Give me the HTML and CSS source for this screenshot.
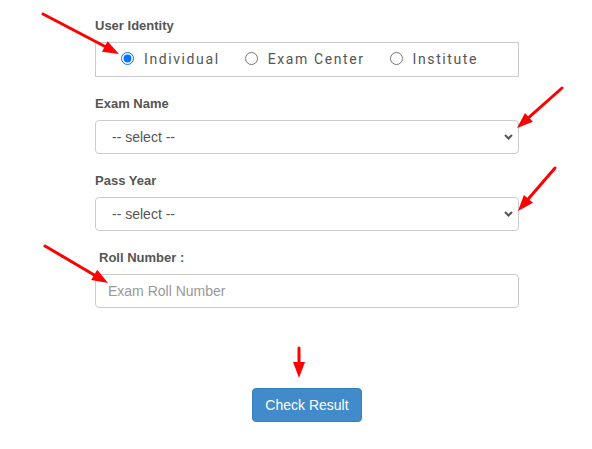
FILE: index.html
```html
<!DOCTYPE html>
<html lang="en">
<head>
<meta charset="utf-8">
<title>Check Result</title>
<link rel="stylesheet" href="styles.css">
</head>
<body>
<form class="form">
  <div class="group">
    <label class="lbl">User Identity</label>
    <div class="radio-box">
      <label class="opt"><input type="radio" name="identity" checked><span>Individual</span></label>
      <label class="opt"><input type="radio" name="identity"><span>Exam Center</span></label>
      <label class="opt"><input type="radio" name="identity"><span>Institute</span></label>
    </div>
  </div>
  <div class="group">
    <label class="lbl">Exam Name</label>
    <div class="select-wrap">
      <select class="ctl sel"><option>-- select --</option></select>
      <svg class="chev" viewBox="0 0 9 6" width="9" height="6"><path d="M1 1 L4.5 4.5 L8 1" fill="none" stroke="#555" stroke-width="2"/></svg>
    </div>
  </div>
  <div class="group">
    <label class="lbl">Pass Year</label>
    <div class="select-wrap">
      <select class="ctl sel"><option>-- select --</option></select>
      <svg class="chev" viewBox="0 0 9 6" width="9" height="6"><path d="M1 1 L4.5 4.5 L8 1" fill="none" stroke="#555" stroke-width="2"/></svg>
    </div>
  </div>
  <div class="group last">
    <label class="lbl indent">Roll Number :</label>
    <input class="ctl" type="text" placeholder="Exam Roll Number">
  </div>
  <div class="actions">
    <button class="btn" type="button">Check Result</button>
  </div>
</form>
<svg class="arrows" viewBox="0 0 592 449" width="592" height="449">
  <g stroke="#f00" stroke-width="3" fill="none" stroke-linecap="round">
    <line x1="43" y1="14" x2="106" y2="47"/>
    <line x1="562" y1="88" x2="527.5" y2="118.7"/>
    <line x1="555" y1="168" x2="527.4" y2="200.1"/>
    <line x1="45" y1="246" x2="95.5" y2="275.7"/>
    <line x1="299" y1="348" x2="299" y2="364"/>
  </g>
  <g fill="#f00">
    <polygon points="119,54 102,51.85 107.6,41.2"/>
    <polygon points="517,128 524.97,112.89 532.93,121.85"/>
    <polygon points="518,211 523.88,194.96 532.98,202.78"/>
    <polygon points="108,283 91.16,280.07 97.24,269.73"/>
    <polygon points="299,378 293,362 305,362"/>
  </g>
</svg>
</body>
</html>
```
FILE: styles.css
```css
body {
  margin: 0;
  background: #fff;
  font-family: "Liberation Sans", Arial, sans-serif;
}

.form {
  width: 424px;
  margin-left: 95px;
  padding-top: 17px;
}

.group {
  margin-bottom: 18px;
}

.group.last {
  margin-bottom: 0;
}

.lbl {
  display: block;
  font-size: 13px;
  line-height: 18px;
  font-weight: bold;
  color: #555;
  margin-bottom: 7px;
}

.lbl.indent {
  padding-left: 4px;
}

.radio-box {
  height: 35px;
  box-sizing: border-box;
  border: 1px solid #ccc;
  display: flex;
  align-items: center;
  padding: 0 0 2px 25px;
  gap: 25px;
}

.opt {
  display: flex;
  align-items: center;
  gap: 10px;
  font-family: Roboto, "Liberation Sans", sans-serif;
  font-size: 14px;
  letter-spacing: 1.6px;
  color: #555;
}

.opt input {
  margin: 0;
  width: 13px;
  height: 13px;
}

.ctl {
  display: block;
  width: 100%;
  height: 34px;
  box-sizing: border-box;
  border: 1px solid #ccc;
  border-radius: 4px;
  background: #fff;
  font-family: "Liberation Sans", Arial, sans-serif;
  font-size: 14px;
  color: #555;
  padding: 6px 12px;
  outline: none;
}

.ctl::placeholder {
  color: #999;
}

.sel {
  appearance: none;
  -webkit-appearance: none;
  padding-left: 16px;
}

.select-wrap {
  position: relative;
}

.chev {
  position: absolute;
  right: 6px;
  top: 14px;
}

.actions {
  display: flex;
  justify-content: center;
  margin-top: 80px;
}

.btn {
  height: 34px;
  padding: 0 12px;
  background: #428bca;
  border: 1px solid #357ebd;
  border-radius: 4px;
  color: #fff;
  font-family: "Liberation Sans", Arial, sans-serif;
  font-size: 14px;
}

.arrows {
  position: absolute;
  left: 0;
  top: 0;
  pointer-events: none;
}
```
